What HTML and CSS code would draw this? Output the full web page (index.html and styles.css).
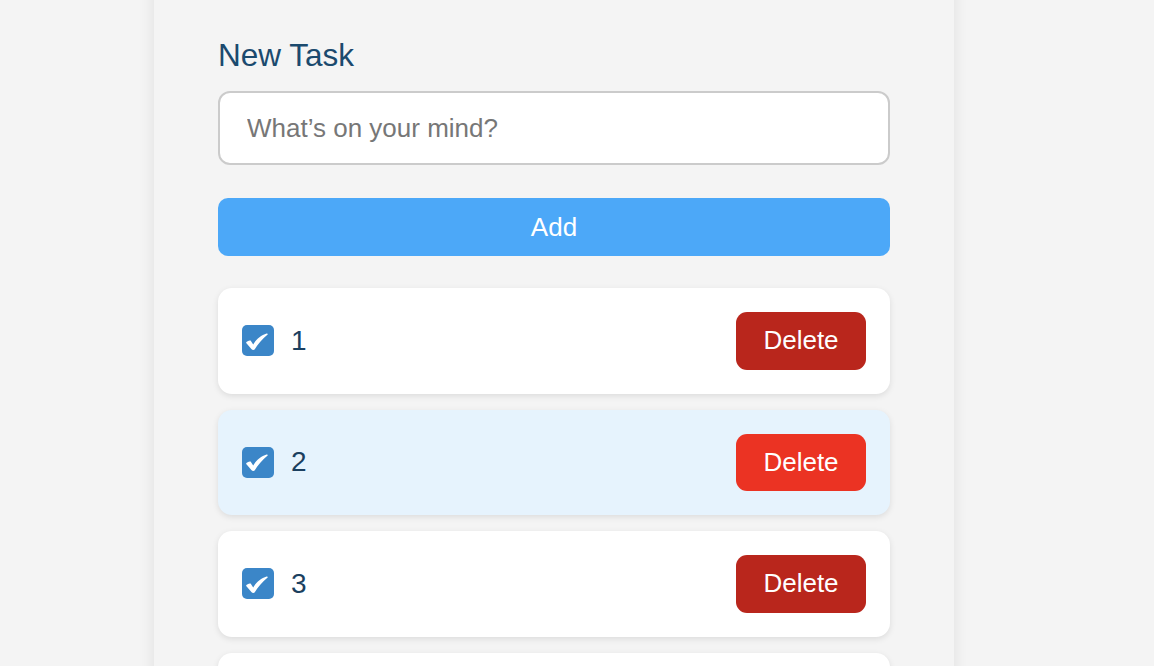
FILE: index.html
```html
<!DOCTYPE html>
<html lang="en">
<head>
<meta charset="utf-8">
<title>Tasks</title>
<link rel="stylesheet" href="styles.css">
</head>
<body>
<main class="panel">
  <h2 class="title">New Task</h2>
  <input class="task-input" type="text" placeholder="What’s on your mind?">
  <button class="add-btn">Add</button>
  <ul class="tasks">
    <li class="task">
      <span class="check"><svg viewBox="0 0 32 32" width="32" height="32"><path d="M4 17.8 C5 16.2 7 15.2 8.6 15.6 L11.2 19.6 C14 14.5 19 10.2 24.6 8.6 C25.6 8.3 26.2 9.1 25.4 9.8 C20.5 14 15.6 19.2 12.8 24.2 C12.2 25.2 10.3 25.2 9.6 24.2 Z" fill="#fff"/></svg></span>
      <span class="label">1</span>
      <button class="del">Delete</button>
    </li>
    <li class="task hover">
      <span class="check"><svg viewBox="0 0 32 32" width="32" height="32"><path d="M4 17.8 C5 16.2 7 15.2 8.6 15.6 L11.2 19.6 C14 14.5 19 10.2 24.6 8.6 C25.6 8.3 26.2 9.1 25.4 9.8 C20.5 14 15.6 19.2 12.8 24.2 C12.2 25.2 10.3 25.2 9.6 24.2 Z" fill="#fff"/></svg></span>
      <span class="label">2</span>
      <button class="del">Delete</button>
    </li>
    <li class="task">
      <span class="check"><svg viewBox="0 0 32 32" width="32" height="32"><path d="M4 17.8 C5 16.2 7 15.2 8.6 15.6 L11.2 19.6 C14 14.5 19 10.2 24.6 8.6 C25.6 8.3 26.2 9.1 25.4 9.8 C20.5 14 15.6 19.2 12.8 24.2 C12.2 25.2 10.3 25.2 9.6 24.2 Z" fill="#fff"/></svg></span>
      <span class="label">3</span>
      <button class="del">Delete</button>
    </li>
    <li class="task task-partial"></li>
  </ul>
</main>
</body>
</html>
```

FILE: styles.css
```css
html, body {
  margin: 0;
  padding: 0;
  background: #f4f4f4;
  font-family: "Liberation Sans", Arial, Helvetica, sans-serif;
  overflow: hidden;
  height: 666px;
}

.panel {
  width: 800px;
  box-sizing: border-box;
  margin: -20px 0 0 154px;
  padding: 57px 64px 40px;
  background: #f4f4f4;
  box-shadow: 0 0 14px rgba(0, 0, 0, 0.09);
  min-height: 900px;
  display: flex;
  flex-direction: column;
}

.title {
  margin: 0 0 18px;
  font-size: 31.5px;
  line-height: 36px;
  font-weight: normal;
  color: #1b4a6e;
}

.task-input {
  height: 74px;
  box-sizing: border-box;
  border: 2px solid #cbcbcb;
  border-radius: 12px;
  padding: 0 27px;
  font-family: inherit;
  font-size: 26px;
  background: #fff;
  color: #333;
  outline: none;
  margin: 0 0 33px;
}

.task-input::placeholder {
  color: #777;
}

.add-btn {
  height: 58px;
  border: none;
  border-radius: 10px;
  background: #4ca8f8;
  color: #fff;
  font-family: inherit;
  font-size: 26px;
  margin: 0 0 32px;
  padding: 0;
}

.tasks {
  list-style: none;
  margin: 0;
  padding: 0;
  display: flex;
  flex-direction: column;
  gap: 16px;
}

.task {
  background: #fff;
  border-radius: 14px;
  padding: 24px;
  display: flex;
  align-items: center;
  box-shadow: 0 2px 6px rgba(0, 0, 0, 0.1);
}

.task-partial {
  height: 58px;
}

.task.hover {
  background: #e6f3fd;
}

.check {
  width: 32px;
  height: 31px;
  border-radius: 5px;
  background: #3b86c8;
  display: flex;
  align-items: center;
  justify-content: center;
  overflow: hidden;
  flex: none;
}

.check svg {
  display: block;
}

.label {
  margin-left: 17px;
  font-size: 28px;
  color: #1b3f5f;
  flex: 1;
}

.del {
  width: 130px;
  height: 57.5px;
  border: none;
  border-radius: 11px;
  background: #b9261c;
  color: #fff;
  font-family: inherit;
  font-size: 26px;
  padding: 0;
}

.task.hover .del {
  background: #eb3323;
}
```
